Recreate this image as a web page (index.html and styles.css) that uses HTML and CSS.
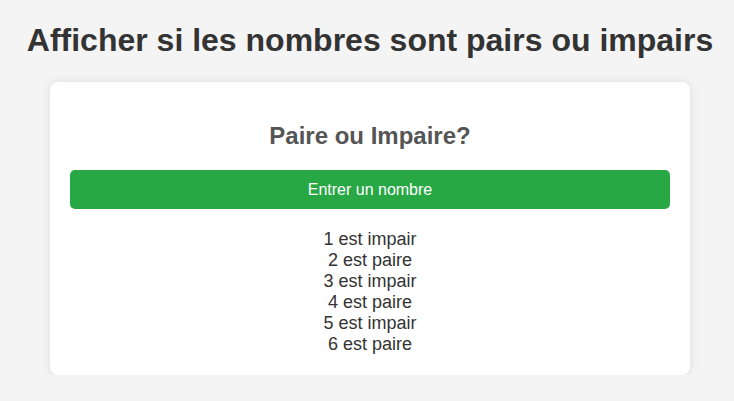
FILE: index.html
```html
<!DOCTYPE html>
<html lang="fr">
<head>
    <meta charset="UTF-8">
    <title>Pair ou impair</title>
    <link rel="stylesheet" href="styles.css">
</head>
<body>
<h1>Afficher si les nombres sont pairs ou impairs</h1>
<div class="container">
    <h2>Paire ou Impaire?</h2>
    <button class="btn">Entrer un nombre</button>
    <div class="result">
        <p>1 est impair</p>
        <p>2 est paire</p>
        <p>3 est impair</p>
        <p>4 est paire</p>
        <p>5 est impair</p>
        <p>6 est paire</p>
    </div>
</div>
</body>
</html>
```

FILE: styles.css
```css
body{
    margin: 0;
    padding: 0 20px 0 26px;
    font-family: "Liberation Sans", Arial, sans-serif;
    background-color: #f4f4f4;
    color: #333333;
    text-align: center;
}

h1{
    font-size: 32px;
    margin: 22px 0 23px;
}

.container{
    max-width: 600px;
    margin: 0 auto;
    background-color: #ffffff;
    padding: 20px;
    border-radius: 8px;
    box-shadow: 0 0 10px rgba(0, 0, 0, 0.1);
}

h2{
    font-size: 24px;
    color: #555555;
    margin: 20px 0;
}

.btn{
    display: block;
    width: 100%;
    padding: 11px 10px 10px;
    border: none;
    border-radius: 5px;
    background-color: #28a745;
    color: #ffffff;
    font-family: "Liberation Sans", Arial, sans-serif;
    font-size: 16px;
    cursor: pointer;
}

.result{
    margin-top: 20px;
    font-size: 18px;
}

.result p{
    margin: 0;
}
```
